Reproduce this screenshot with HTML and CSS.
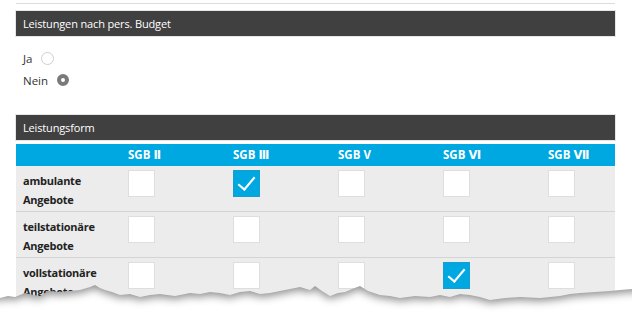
FILE: index.html
```html
<!DOCTYPE html>
<html lang="de">
<head>
  <meta charset="UTF-8">
  <title>Leistungen</title>
  <link rel="stylesheet" href="styles.css">
</head>
<body>

  <div class="page">
    <div class="rule"></div>

    <div class="bar">Leistungen nach pers. Budget</div>

    <div class="choices">
      <label class="choice"><span>Ja</span><span class="radio"></span></label>
      <label class="choice"><span>Nein</span><span class="radio checked"></span></label>
    </div>

    <div class="bar">Leistungsform</div>

    <div class="matrix">
      <div class="head"></div>
      <div class="head">SGB Ⅱ</div>
      <div class="head">SGB Ⅲ</div>
      <div class="head">SGB V</div>
      <div class="head">SGB Ⅵ</div>
      <div class="head">SGB Ⅶ</div>

      <div class="row-label">ambulante<br>Angebote</div>
      <div class="cell"><span class="box"></span></div>
      <div class="cell"><span class="box on"></span></div>
      <div class="cell"><span class="box"></span></div>
      <div class="cell"><span class="box"></span></div>
      <div class="cell"><span class="box"></span></div>

      <div class="row-label">teilstationäre<br>Angebote</div>
      <div class="cell"><span class="box"></span></div>
      <div class="cell"><span class="box"></span></div>
      <div class="cell"><span class="box"></span></div>
      <div class="cell"><span class="box"></span></div>
      <div class="cell"><span class="box"></span></div>

      <div class="row-label">vollstationäre<br>Angebote</div>
      <div class="cell"><span class="box"></span></div>
      <div class="cell"><span class="box"></span></div>
      <div class="cell"><span class="box"></span></div>
      <div class="cell"><span class="box on"></span></div>
      <div class="cell"><span class="box"></span></div>
    </div>
  </div>

  <!-- torn paper edge: white below the tear, paper shadow cast onto it -->
  <svg class="torn" width="632" height="50" viewBox="0 270 632 50">
    <defs>
      <path id="below"
        d="M0 298 L8 296 L15 297 L25 293 L33 295 L40 296 L48 291 L60 292 L70 291 L80 290 L90 287 L95 285 L100 288 L105 290 L112 292 L120 295 L130 294 L140 297 L150 295 L160 294 L175 296 L190 293 L200 294 L210 292 L220 293 L230 295 L240 292 L250 291 L260 294 L270 293 L280 291 L290 289 L300 287 L310 290 L315 286 L322 291 L330 296 L338 293 L345 292 L352 289 L360 286 L368 291 L380 295 L390 296 L400 298 L415 296 L430 297 L440 295 L450 297 L460 294 L470 295 L480 297 L490 300 L505 298 L520 297 L540 298 L560 296 L570 294 L580 293 L595 292 L610 291 L620 290 L632 289 L632 320 L0 320 Z"/>
      <clipPath id="belowClip">
        <use href="#below"/>
      </clipPath>
      <filter id="soft" x="-5%" y="-100%" width="110%" height="300%">
        <feGaussianBlur stdDeviation="4"/>
      </filter>
    </defs>
    <use href="#below" fill="#fff"/>
    <g clip-path="url(#belowClip)">
      <path fill="#000" fill-opacity="0.45" filter="url(#soft)"
        d="M-10 250 L642 250 L642 292 L632 292 L620 293 L610 294 L595 295 L580 296 L570 297 L560 299 L540 301 L520 300 L505 301 L490 303 L480 300 L470 298 L460 297 L450 300 L440 298 L430 300 L415 299 L400 301 L390 299 L380 298 L368 294 L360 289 L352 292 L345 295 L338 296 L330 299 L322 294 L315 289 L310 293 L300 290 L290 292 L280 294 L270 296 L260 297 L250 294 L240 295 L230 298 L220 296 L210 295 L200 297 L190 296 L175 299 L160 297 L150 298 L140 300 L130 297 L120 298 L112 295 L105 293 L100 291 L95 288 L90 290 L80 293 L70 294 L60 295 L48 294 L40 299 L33 298 L25 296 L15 300 L8 299 L-10 301 Z"/>
    </g>
  </svg>

</body>
</html>
```

FILE: styles.css
```css
html, body {
  margin: 0;
  height: 318px;
  overflow: hidden;
  background: #fff;
}

body {
  font-family: 'Open Sans', 'DejaVu Sans', sans-serif;
  color: #333;
  position: relative;
}

.page {
  width: 599px;
  margin-left: 16px;
}

.rule {
  margin-top: 3px;
  height: 1px;
  background: #dcdcdc;
  margin-bottom: 7px;
}

.bar {
  background: #404040;
  color: #fff;
  font-size: 11px;
  letter-spacing: -0.15px;
  height: 25px;
  line-height: 25px;
  padding: 0 7px;
  box-shadow: 0 0 0 1px #e6e6e6;
}

.choices {
  padding: 11px 7px 0;
  margin-bottom: 24px;
}

.choice {
  display: flex;
  align-items: center;
  gap: 9px;
  height: 22px;
  font-size: 11.5px;
  color: #333;
}

.radio {
  width: 11px;
  height: 11px;
  border: 1px solid #cfcfcf;
  border-radius: 50%;
  background: #fff;
}

.radio.checked {
  width: 4px;
  height: 4px;
  border: 4px solid #7a7a7a;
}

.matrix {
  margin-top: 4px;
  display: grid;
  grid-template-columns: 112px 105px 105px 105px 105px 67px;
}

.head {
  background: #00a8e1;
  color: #fff;
  font-weight: 700;
  font-size: 11.5px;
  height: 22px;
  line-height: 22px;
}

.row-label,
.cell {
  background: #ececec;
  height: 45px;
  border-bottom: 1px solid #d4d4d4;
}

.row-label {
  padding: 5px 0 0 7px;
  height: 40px;
  font-size: 11px;
  letter-spacing: -0.25px;
  font-weight: 700;
  line-height: 19px;
  color: #222;
}

.cell {
  padding-top: 4px;
  height: 41px;
}

.box {
  display: block;
  width: 25px;
  height: 25px;
  background: #fff;
  border: 1px solid #dedede;
  position: relative;
}

.box.on {
  background: #00a8e1;
  border-color: #1a9ccc;
}

.box.on::after {
  content: "";
  position: absolute;
  left: 8px;
  top: 2px;
  width: 7px;
  height: 15px;
  border-right: 2px solid #fff;
  border-bottom: 2px solid #fff;
  transform: rotate(40deg);
}

.torn {
  position: absolute;
  left: 0;
  top: 270px;
  display: block;
}
```
